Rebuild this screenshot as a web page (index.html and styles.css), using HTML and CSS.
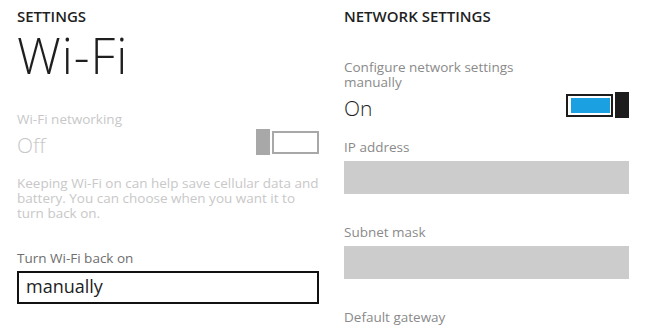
FILE: index.html
```html
<!DOCTYPE html>
<html lang="en">
<head>
    <meta charset="UTF-8">
    <meta name="viewport" content="width=device-width, initial-scale=1.0">
    <title>Wi-Fi Settings</title>
    <link rel="stylesheet" href="styles.css">
</head>
<body>
    <div class="screens">
        <!-- Wi-Fi page -->
        <div class="page page-wifi">
            <div class="app-title">SETTINGS</div>
            <div class="page-title">Wi-Fi</div>

            <div class="setting disabled wifi-toggle">
                <div class="label">Wi-Fi networking</div>
                <div class="value-row">
                    <span class="value">Off</span>
                    <span class="toggle off"><span class="thumb"></span><span class="track"></span></span>
                </div>
            </div>

            <p class="hint">Keeping Wi-Fi on can help save cellular data and battery. You can choose when you want it to turn back on.</p>

            <div class="label turn-back">Turn Wi-Fi back on</div>
            <div class="picker">manually</div>
        </div>

        <!-- Network settings page -->
        <div class="page page-network">
            <div class="app-title">NETWORK SETTINGS</div>

            <div class="setting manual-toggle">
                <div class="label wrap">Configure network settings manually</div>
                <div class="value-row">
                    <span class="value">On</span>
                    <span class="toggle on"><span class="track"><span class="fill"></span></span><span class="thumb"></span></span>
                </div>
            </div>

            <div class="field first">
                <div class="label">IP address</div>
                <div class="textbox"></div>
            </div>
            <div class="field">
                <div class="label">Subnet mask</div>
                <div class="textbox"></div>
            </div>
            <div class="field">
                <div class="label">Default gateway</div>
            </div>
        </div>
    </div>
</body>
</html>
```

FILE: styles.css
```css
/* base */
body {
    margin: 0;
    background-color: #fff;
    font-family: "Open Sans", "Noto Sans", sans-serif;
    color: #1f1f1f;
    overflow: hidden;
}

.screens {
    display: grid;
    grid-template-columns: 302px 285px;
    column-gap: 25px;
    padding-left: 17px;
    padding-top: 8px;
}

/* headers */
.app-title {
    font-size: 15px;
    font-weight: 600;
    line-height: 16px;
}

.page-title {
    margin-top: 5px;
    font-size: 49px;
    font-weight: 300;
    line-height: 52px;
    letter-spacing: 1px;
}

/* labels and values */
.label {
    font-size: 13.5px;
    line-height: 20px;
    color: #8a8a8a;
}

.value {
    font-size: 21px;
    font-weight: 300;
    line-height: 26px;
}

.value-row {
    display: flex;
    justify-content: space-between;
    align-items: center;
}

.disabled .label,
.disabled .value {
    color: #c8c8c8;
}

.wifi-toggle {
    margin-top: 28px;
}

.wifi-toggle .value-row {
    margin-top: 0;
}

.wifi-toggle .toggle {
    margin-bottom: 5px;
}

.hint {
    margin: 16px 0 0;
    font-size: 13.5px;
    line-height: 15px;
    color: #c8c8c8;
}

.turn-back {
    margin-top: 27px;
    color: #6e6e6e;
}

.picker {
    box-sizing: border-box;
    height: 33px;
    margin-top: 3px;
    padding: 2px 7px 0;
    border: 2px solid #111;
    font-size: 18px;
    line-height: 22px;
    color: #222;
}

/* toggle switch */
.toggle {
    display: flex;
    gap: 2px;
    align-items: center;
    width: 63px;
    height: 26px;
}

.toggle .thumb {
    width: 14px;
    height: 26px;
}

.toggle .track {
    box-sizing: border-box;
    width: 47px;
    height: 23px;
    border: 2px solid;
}

.toggle.off .thumb {
    background-color: #a8a8a8;
}

.toggle.off .track {
    border-color: #a8a8a8;
}

.toggle.on .thumb {
    background-color: #1c1c1c;
}

.toggle.on .track {
    border-color: #1c1c1c;
    padding: 2px 1px 2px 3px;
}

.toggle.on .fill {
    display: block;
    height: 100%;
    background-color: #1ba1e2;
}

/* network page */
.manual-toggle {
    margin-top: 36px;
}

.label.wrap {
    width: 210px;
    line-height: 15px;
}

.manual-toggle .value-row {
    margin-top: 2px;
}

.manual-toggle .toggle {
    margin-bottom: 5px;
}

.field {
    margin-top: 28px;
}

.field.first {
    margin-top: 14px;
}

.textbox {
    height: 33px;
    margin-top: 4px;
    background-color: #cccccc;
}
```
